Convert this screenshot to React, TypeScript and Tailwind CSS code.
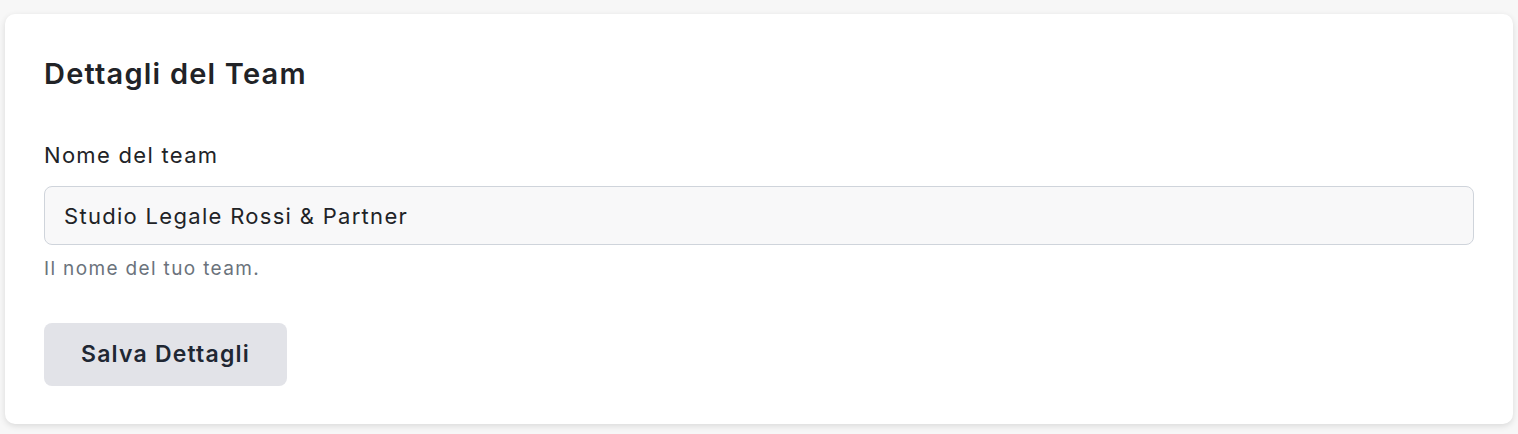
import React from "react";

export default function App() {
  return (
    <div
      className="min-h-[434px] bg-[#f7f7f7] px-[5px] pt-[14px]"
      style={{ fontFamily: "Inter, 'Liberation Sans', sans-serif" }}
    >
      <div className="rounded-[10px] bg-white px-[39px] pb-[38px] pt-[40px] shadow-[0_2px_6px_rgba(0,0,0,0.12)]">
        <h2 className="text-[29px] font-semibold leading-[40px] tracking-[1.2px] text-[#212327]">Dettagli del Team</h2>
        <div className="mt-[45px]">
          <label className="block text-[22px] leading-[32px] tracking-[1.3px] text-[#212327]">Nome del team</label>
          <input
            readOnly
            value="Studio Legale Rossi & Partner"
            className="mt-[15px] block h-[59px] w-full rounded-[8px] border border-[#cfd4db] bg-[#f8f8f9] px-[19px] text-[22px] tracking-[1.3px] text-[#212327] outline-none"
          />
          <p className="mt-[11px] text-[19px] leading-[26px] tracking-[1.35px] text-[#6b737c]">Il nome del tuo team.</p>
        </div>
        <button className="mt-[41px] h-[63px] w-[243px] rounded-[8px] bg-[#e2e3e8] text-[23px] font-semibold tracking-[1.2px] text-[#1f2733]">
          Salva Dettagli
        </button>
      </div>
    </div>
  );
}
